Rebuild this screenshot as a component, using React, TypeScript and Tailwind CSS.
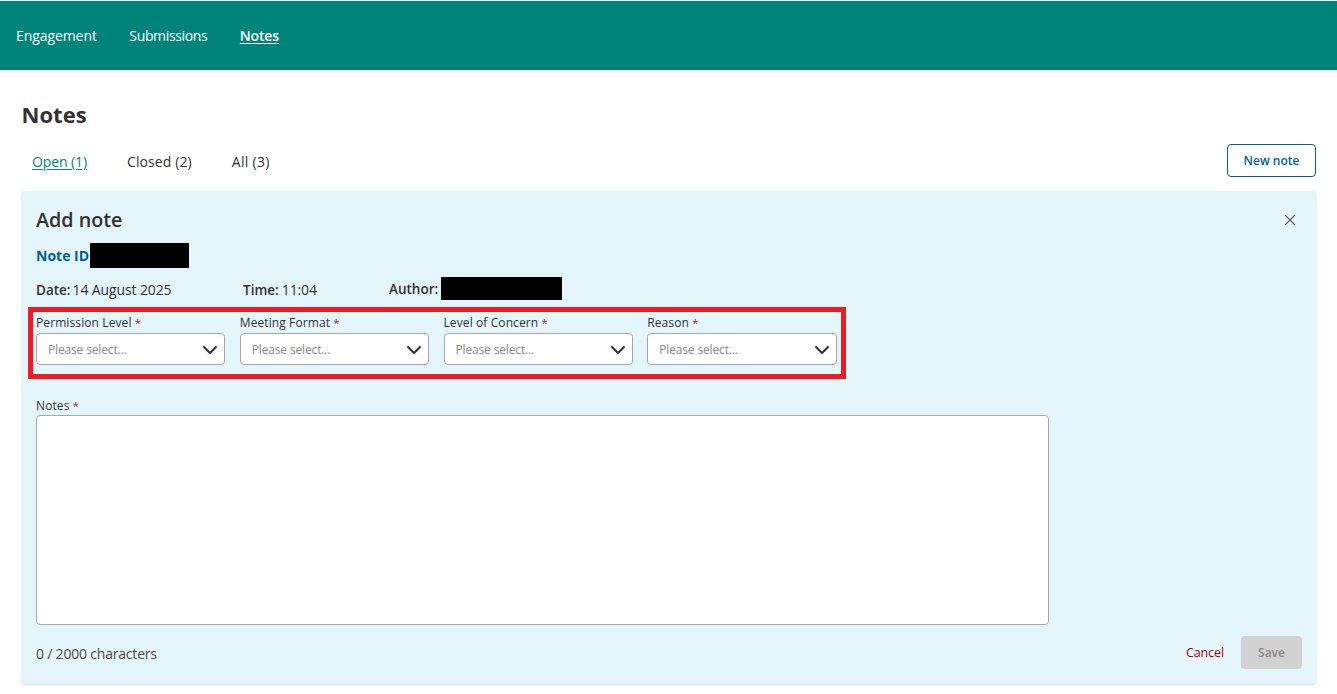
import { ChevronDown, X } from "lucide-react";

const font = "font-['Open_Sans','Noto_Sans',sans-serif]";

function Field({ label }: { label: string }) {
  return (
    <div className="flex w-[189.25px] flex-col">
      <div className="mt-px h-[17px] text-[12px] leading-[18px] tracking-[0.1px] text-[#323130]">
        {label} <span className="text-[11px] text-[#a4262c]">*</span>
      </div>
      <div className="mt-[2px] flex h-[32px] items-center justify-between rounded-[4px] border border-[#a6a6a6] bg-white pl-[11px] pr-[2px]">
        <span className="mt-[2px] text-[12px] tracking-[-0.15px] text-[#8a8886]">Please select...</span>
        <ChevronDown className="mt-[2px] h-[24px] w-[24px] text-[#323130]" strokeWidth={2} />
      </div>
    </div>
  );
}

export default function App() {
  return (
    <div className={`${font} h-[694px] w-[1337px] overflow-hidden bg-white`}>
      <nav className="mt-px flex h-[69px] items-center gap-[32.5px] bg-[#00847a] pl-[16px] text-[14px] text-white">
        <a className="tracking-[-0.08px]">Engagement</a>
        <a className="tracking-[-0.35px]">Submissions</a>
        <a className="font-semibold tracking-[-0.2px] underline underline-offset-2">Notes</a>
      </nav>

      <main className="px-[21px]">
        <h1 className="ml-[0.6px] mt-[29px] h-[30px] text-[22px] font-bold leading-[30px] text-[#323130]">Notes</h1>

        <div className="mt-[8px] flex h-[50px] items-center justify-between">
          <div className="-mt-[2px] flex gap-[40px] pl-[11px] text-[14px] font-medium text-[#323130]">
            <a className="tracking-[-0.1px] text-[#00847a] underline underline-offset-2">Open (1)</a>
            <a className="tracking-[0.1px]">Closed (2)</a>
            <a className="tracking-[0.3px]">All (3)</a>
          </div>
          <button className="mb-[3px] h-[33px] w-[89px] rounded-[4px] border border-[#005f8f] bg-white text-[12px] font-semibold text-[#005f8f]">
            New note
          </button>
        </div>

        <section className="mt-[4px] h-[493px] w-[1296px] rounded-[4px] bg-[#e4f5fc] px-[15px] shadow-[0_1px_1px_rgba(0,0,0,0.12)]">
          <div className="flex h-[47px] items-center justify-between pt-[11px]">
            <h2 className="text-[19.7px] font-semibold text-[#323130]">Add note</h2>
            <X className="mr-[3px] h-[18px] w-[18px] text-[#605e5c]" strokeWidth={1.5} />
          </div>

          <div className="mt-[4px] flex h-[26px] items-center">
            <span className="text-[14px] font-bold text-[#005f8f]">Note ID</span>
            <span className="ml-px h-[25px] w-[99px] bg-black" />
          </div>

          <div className="mt-[8px] flex h-[24px] items-center text-[14px] text-[#323130]">
            <div className="mt-[3px] flex w-[207px] items-baseline gap-[2px]">
              <span className="text-[13.5px] font-semibold">Date:</span>
              <span className="tracking-[-0.12px]">14 August 2025</span>
            </div>
            <div className="mt-[3px] flex w-[146px] items-baseline gap-[3px]">
              <span className="text-[13.5px] font-semibold">Time:</span>
              <span className="tracking-[-0.12px]">11:04</span>
            </div>
            <span className="mt-[3px] text-[13.5px] font-semibold">Author:</span>
            <span className="ml-[3px] h-[23px] w-[121px] bg-black" />
          </div>

          <div className="-ml-[8px] mt-[7px] flex h-[72px] w-[818px] gap-[14.5px] border-[5px] border-[#ed1c24] pl-[3px] pt-px">
            <Field label="Permission Level" />
            <Field label="Meeting Format" />
            <Field label="Level of Concern" />
            <Field label="Reason" />
          </div>

          <div className="mt-[18px] h-[18px] text-[12px] leading-[18px] tracking-[0.1px] text-[#323130]">
            Notes <span className="text-[11px] text-[#a4262c]">*</span>
          </div>
          <textarea className="block h-[210px] w-[1013px] resize-none rounded-[4px] border border-[#a6a6a6] bg-white" />

          <div className="mt-[11px] flex h-[33px] items-center justify-between">
            <span className="mt-px text-[14px] tracking-[-0.2px] text-[#4a4a4a]">0 / 2000 characters</span>
            <div className="flex items-center gap-[17px]">
              <a className="mt-[2px] text-[12.5px] font-medium tracking-[-0.1px] text-[#a80000]">Cancel</a>
              <button className="h-[33px] w-[61px] rounded-[4px] bg-[#d2d2d2] text-[12px] font-semibold text-[#8a8886]">
                Save
              </button>
            </div>
          </div>
        </section>
      </main>
    </div>
  );
}
